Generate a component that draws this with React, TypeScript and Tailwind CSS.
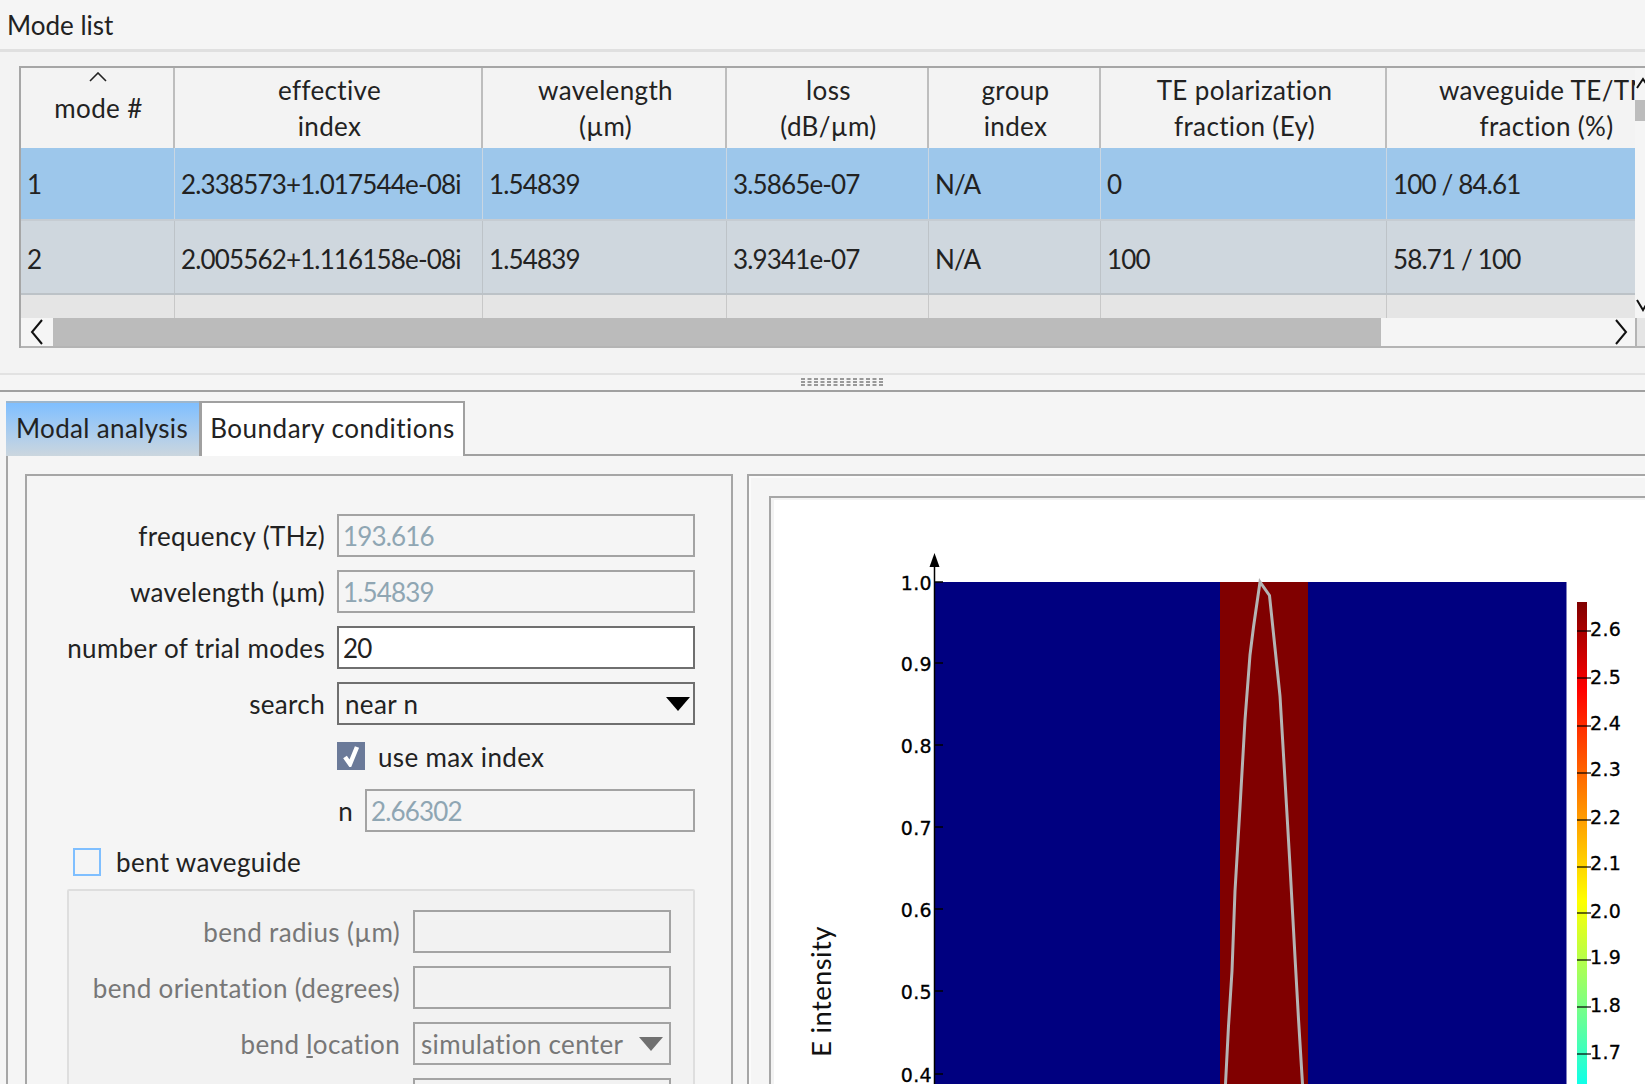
const labelFont = "font-['Lato',sans-serif]";

const columns = [
  { w: "w-[154px]", head: ["mode #"], one: "1", two: "2" },
  { w: "w-[308px]", head: ["effective", "index"], one: "2.338573+1.017544e-08i", two: "2.005562+1.116158e-08i" },
  { w: "w-[244px]", head: ["wavelength", "(µm)"], one: "1.54839", two: "1.54839" },
  { w: "w-[202px]", head: ["loss", "(dB/µm)"], one: "3.5865e-07", two: "3.9341e-07" },
  { w: "w-[172px]", head: ["group", "index"], one: "N/A", two: "N/A" },
  { w: "w-[286px]", head: ["TE polarization", "fraction (Ey)"], one: "0", two: "100" },
  { w: "w-[318px]", head: ["waveguide TE/TM", "fraction (%)"], one: "100 / 84.61", two: "58.71 / 100" },
];

function Chevron({ dir }: { dir: "left" | "right" }) {
  return (
    <svg width="14" height="26" viewBox="0 0 14 26" fill="none" stroke="#111" strokeWidth="2">
      {dir === "left" ? <path d="M12 1 L2 13 L12 25" /> : <path d="M2 1 L12 13 L2 25" />}
    </svg>
  );
}

function ModeTable() {
  return (
    <div className="ml-[19px] flex h-[282px] w-[1626px] border-t-2 border-[#a6a6a6]">
      <div className="w-[1616px] shrink-0 overflow-hidden border-l-2 border-[#a6a6a6]">
        <div className="flex h-[80px] w-[1700px]">
          {columns.map((c, i) => (
            <div key={i} className={`${c.w} relative flex shrink-0 flex-col items-center justify-center border-r-2 border-[#bdbdbd] pl-[3px] text-center leading-[36px] text-[#222]`}>
              {i === 0 && (
                <svg className="absolute left-[68px] top-[4px]" width="18" height="10" viewBox="0 0 18 10" fill="none" stroke="#222" strokeWidth="1.6">
                  <path d="M1 9 L9 1 L17 9" />
                </svg>
              )}
              {c.head.map((line) => (
                <span key={line}>{line}</span>
              ))}
            </div>
          ))}
        </div>
        <div className="flex h-[73px] w-[1700px] border-b-2 border-[#c6ccd2] bg-[#9dc7eb]">
          {columns.map((c, i) => (
            <div key={i} className={`${c.w} flex shrink-0 items-center border-r border-[#c9d6e2] pl-[6px] pt-[1px] tracking-[-0.85px] text-[#222]`}>{c.one}</div>
          ))}
        </div>
        <div className="flex h-[74px] w-[1700px] border-b-2 border-[#bcc2c7] bg-[#cfd7de]">
          {columns.map((c, i) => (
            <div key={i} className={`${c.w} flex shrink-0 items-center border-r border-[#bdc3c8] pl-[6px] pt-[3px] tracking-[-0.85px] text-[#222]`}>{c.two}</div>
          ))}
        </div>
        <div className="flex h-[23px] w-[1700px] bg-[#e5e5e5]">
          {columns.map((c, i) => (
            <div key={i} className={`${c.w} shrink-0 border-r border-[#c8c8c8]`} />
          ))}
        </div>
        <div className="flex h-[30px] items-stretch border-b-2 border-[#b4b4b4] bg-[#f5f5f5]">
          <div className="flex w-[32px] items-center justify-center">
            <Chevron dir="left" />
          </div>
          <div className="w-[1328px] bg-[#bbbbbb]" />
          <div className="flex flex-1 items-center justify-end pr-[7px]">
            <Chevron dir="right" />
          </div>
        </div>
      </div>
      <div className="flex w-[10px] flex-col overflow-hidden bg-[#f5f5f5]">
        <svg className="shrink-0" width="10" height="32" viewBox="0 0 10 32" fill="none" stroke="#111" strokeWidth="2">
          <path d="M2 20 L8 11 L14 20" />
        </svg>
        <div className="h-[21px] w-[10px] shrink-0 bg-[#bcbcbc]" />
        <div className="flex-1" />
        <svg className="shrink-0" width="10" height="20" viewBox="0 0 10 20" fill="none" stroke="#111" strokeWidth="2">
          <path d="M2 2 L8 12 L14 2" />
        </svg>
        <div className="h-[30px] shrink-0 border-b-2 border-l-2 border-[#b4b4b4] bg-[#e5e5e5]" />
      </div>
    </div>
  );
}

function Field({ label, value, kind }: { label: string; value?: string; kind: "off" | "on" | "select" }) {
  return (
    <div className="flex h-[43px] items-center">
      <span className="w-[298px] text-right text-[#222]">{label}</span>
      <div className={`ml-[12px] flex h-[43px] w-[358px] items-center justify-between border-2 ${kind === "off" ? "border-[#a3a3a3] pl-[4px] pr-[4px] tracking-[-0.85px] text-[#8fa6b3]" : "border-[#6f6f6f] text-[#222]"} ${kind === "on" ? "bg-white pl-[4px] tracking-[-0.85px]" : ""} ${kind === "select" ? "pl-[6px] pr-[3px]" : ""}`}>
        <span>{value}</span>
        {kind === "select" && (
          <svg width="24" height="16" viewBox="0 0 24 16"><path d="M0 1 H24 L12 15 Z" fill="#000" /></svg>
        )}
      </div>
    </div>
  );
}

function BentField({ label, value, select }: { label: React.ReactNode; value?: string; select?: boolean }) {
  return (
    <div className="flex h-[43px] items-center">
      <span className="w-[331px] text-right text-[#777]">{label}</span>
      <div className="ml-[13px] flex h-[43px] w-[258px] items-center justify-between border-2 border-[#a3a3a3] px-[6px] text-[#777]">
        <span>{value}</span>
        {select && (
          <svg width="24" height="16" viewBox="0 0 24 16"><path d="M0 1 H24 L12 15 Z" fill="#707070" /></svg>
        )}
      </div>
    </div>
  );
}

function SettingsPanel() {
  return (
    <div className="h-[610px] w-[708px] shrink-0 overflow-hidden border-x-2 border-t-2 border-[#a6a6a6]">
      <div className="mt-[38px] flex flex-col gap-[13px]">
        <Field label="frequency (THz)" value="193.616" kind="off" />
        <Field label="wavelength (µm)" value="1.54839" kind="off" />
        <Field label="number of trial modes" value="20" kind="on" />
        <Field label="search" value="near n" kind="select" />
      </div>
      <div className="mt-[17px] flex h-[28px] items-center pl-[310px] text-[#222]">
        <div className="flex size-[28px] items-center justify-center bg-[#6b7a99]">
          <svg width="18" height="22" viewBox="0 0 18 22" fill="none" stroke="#fff" strokeWidth="4.5"><path d="M3 12 L8 19 L15 2" /></svg>
        </div>
        <span className="ml-[13px] pt-[2px]">use max index</span>
      </div>
      <div className="mt-[19px] flex h-[43px] items-center">
        <span className="w-[326px] text-right text-[#222]">n</span>
        <div className="ml-[12px] flex h-[43px] w-[330px] items-center border-2 border-[#a3a3a3] px-[4px] tracking-[-0.85px] text-[#8fa6b3]">2.66302</div>
      </div>
      <div className="mt-[16px] flex h-[28px] items-center pl-[46px] text-[#222]">
        <div className="size-[28px] border-2 border-[#7fbfff]" />
        <span className="ml-[15px]">bent waveguide</span>
      </div>
      <div className="ml-[40px] mt-[13px] h-[300px] w-[628px] rounded-t-[2px] border-2 border-[#dedede] bg-[#f2f2f2] pt-[19px]">
        <div className="flex flex-col gap-[13px]">
          <BentField label="bend radius (µm)" />
          <BentField label="bend orientation (degrees)" />
          <BentField label={<>bend <span className="underline">l</span>ocation</>} value="simulation center" select />
          <BentField label="" />
        </div>
      </div>
    </div>
  );
}

const curve = "1225.5,1084 1228.5,1026 1232,971 1235,891 1240,807 1245,720 1250,655 1253.5,627 1260,582 1269.5,595.5 1275,648 1280,696 1285,780 1290,866 1295,957 1298.5,1019 1302.5,1084";
const yTicks = [
  ["1.0", 582], ["0.9", 663], ["0.8", 745], ["0.7", 827], ["0.6", 909], ["0.5", 991], ["0.4", 1074],
] as const;
// tick y, then the nudge of the label against its tick
const barTicks = [
  ["2.6", 631, 0], ["2.5", 678, 1], ["2.4", 726, -1], ["2.3", 773, -2], ["2.2", 820, -1], ["2.1", 867, -2], ["2.0", 913, 0], ["1.9", 960, -1], ["1.8", 1007, 0], ["1.7", 1054, 0],
] as const;

function ModePlot() {
  return (
    <svg className="block" width="871" height="584" viewBox="774 500 871 584">
      <defs>
        <linearGradient id="jet" gradientUnits="userSpaceOnUse" x1="0" y1="602" x2="0" y2="1084">
          <stop offset="0" stopColor="#7f0000" />
          <stop offset="0.18" stopColor="#ff0000" />
          <stop offset="0.4" stopColor="#ff8000" />
          <stop offset="0.62" stopColor="#ffff00" />
          <stop offset="0.83" stopColor="#80ff80" />
          <stop offset="1" stopColor="#10ffe8" />
        </linearGradient>
      </defs>
      <rect x="934" y="582" width="632.5" height="502" fill="#000080" />
      <rect x="1220" y="582" width="88" height="502" fill="#800000" />
      <polyline points={curve} fill="none" stroke="#b4b4b4" strokeWidth="3" />
      <path d="M934.5 566 V1084" stroke="#000" strokeWidth="1.5" />
      <path d="M934.5 553 L929.5 567 H939.5 Z" fill="#000" />
      {yTicks.map(([t, y]) => (
        <g key={t}>
          <path d={`M934 ${y} H943`} stroke="#000" strokeWidth="1.5" />
          <text x="932" y={y + 8} textAnchor="end" fontFamily="DejaVu Sans" fontSize="19" stroke="#000" strokeWidth="0.3" fill="#000">{t}</text>
        </g>
      ))}
      <rect x="1577" y="602" width="10" height="482" fill="url(#jet)" />
      {barTicks.map(([t, y, d]) => (
        <g key={t}>
          <path d={`M1577 ${y} H1591`} stroke="#000" strokeWidth="1.2" />
          <text x="1590" y={y + 5 + d} fontFamily="DejaVu Sans" fontSize="19" stroke="#000" strokeWidth="0.3" fill="#000">{t}</text>
        </g>
      ))}
      <text transform="translate(831 1057) rotate(-90)" fontFamily="Lato" fontSize="27.5" fill="#111">E intensity</text>
    </svg>
  );
}

function Grip() {
  return (
    <svg width="84" height="8" viewBox="0 0 84 8">
      {Array.from({ length: 13 }).map((_, i) => (
        <g key={i} fill="#999">
          <rect x={i * 6.5} y="0" width="4" height="2" />
          <rect x={i * 6.5} y="3" width="4" height="2" />
          <rect x={i * 6.5} y="6" width="4" height="2" />
        </g>
      ))}
    </svg>
  );
}

export default function App() {
  return (
    <div className={`${labelFont} h-[1084px] w-[1645px] overflow-hidden bg-[#f5f5f5] text-[26px] leading-[34px] tracking-[0.35px]`}>
      <div className="flex h-[52px] items-center border-b-[3px] border-[#e0e0e0] pl-[7px] tracking-normal text-[#222]">Mode list</div>
      <div className="h-[323px] border-b-2 border-[#e2e2e2] bg-[#f3f3f3] pt-[14px]">
        <ModeTable />
      </div>
      <div className="flex h-[17px] items-center border-b-2 border-[#a0a0a0] pb-[2px] pl-[801px]">
        <Grip />
      </div>
      <div className="flex h-[64px] items-end pl-[6px]">
        <div className="flex h-[55px] w-[193px] items-center justify-center border-t-2 border-[#9db6cc] bg-gradient-to-b from-[#7fbfff] to-[#cbd6de] pb-[4px] pr-[1px] text-[#222]">Modal analysis</div>
        <div className="flex h-[55px] w-[266px] items-center justify-center border-2 border-b-0 border-l-[3px] border-[#a0a0a0] bg-white pb-[4px] tracking-[0.5px] text-[#222]">Boundary conditions</div>
        <div className="h-[2px] flex-1 bg-[#a0a0a0]" />
      </div>
      <div className="ml-[6px] flex gap-[14px] border-l-2 border-[#a6a6a6] pl-[17px] pt-[18px]">
        <SettingsPanel />
        <div className="h-[610px] flex-1 border-l-2 border-t-2 border-[#a6a6a6]">
          <div className="h-full border-l-2 border-t-2 border-[#fbfbfb] pl-[18px] pt-[18px]">
            <div className="h-[600px] border-l-2 border-t-2 border-[#a6a6a6]">
              <div className="h-full border-l-[3px] border-t-2 border-[#f3f3f3] bg-white">
                <ModePlot />
              </div>
            </div>
          </div>
        </div>
      </div>
    </div>
  );
}
